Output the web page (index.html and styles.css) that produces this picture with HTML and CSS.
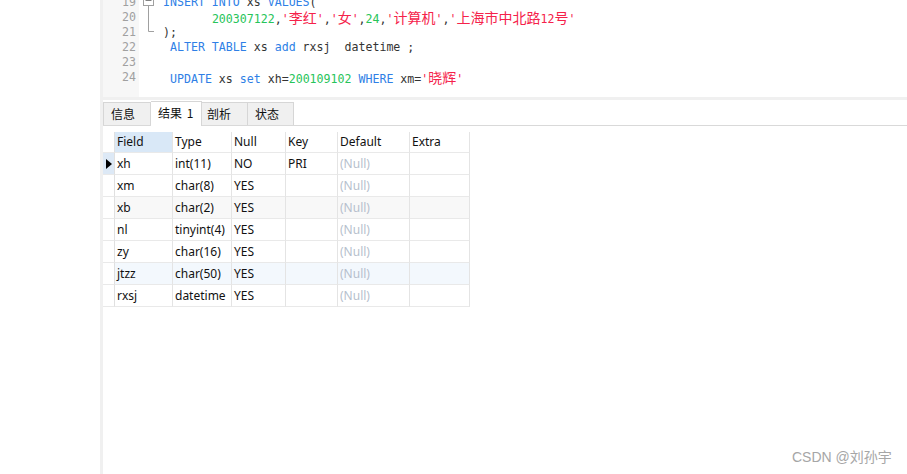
FILE: index.html
```html
<!DOCTYPE html>
<html>
<head>
<meta charset="utf-8">
<link rel="stylesheet" href="styles.css">
</head>
<body>
<div class="app">
  <div class="blank"></div>
  <div class="strip"></div>
  <div class="main">
    <div class="editor">
      <div class="gutter">
        <div class="ln">19</div>
        <div class="ln">20</div>
        <div class="ln">21</div>
        <div class="ln">22</div>
        <div class="ln">23</div>
        <div class="ln">24</div>
      </div>
      <div class="fold">
        <svg width="24" height="40" viewBox="0 0 24 40">
          <rect x="4.5" y="-4.5" width="10" height="10" fill="#fff" stroke="#a0a0a0"/>
          <line x1="6.5" y1="0.5" x2="12.5" y2="0.5" stroke="#808080"/>
          <line x1="9.5" y1="5.5" x2="9.5" y2="31.5" stroke="#a0a0a0"/>
          <line x1="9.5" y1="31.5" x2="15" y2="31.5" stroke="#a0a0a0"/>
        </svg>
      </div>
      <div class="code">
        <div class="line"><span class="kw">INSERT INTO</span> xs <span class="kw">VALUES</span>(</div>
        <div class="line">       <span class="num">200307122</span>,<span class="str">'<span class="cn">李红</span>'</span>,<span class="str">'<span class="cn">女</span>'</span>,<span class="num">24</span>,<span class="str">'<span class="cn">计算机</span>'</span>,<span class="str">'<span class="cn">上海市中北路</span>12<span class="cn">号</span>'</span></div>
        <div class="line">);</div>
        <div class="line"> <span class="kw">ALTER TABLE</span> xs <span class="kw">add</span> rxsj  datetime ;</div>
        <div class="line"> </div>
        <div class="line"> <span class="kw">UPDATE</span> xs <span class="kw">set</span> xh=<span class="num">200109102</span> <span class="kw">WHERE</span> xm=<span class="str">'<span class="cn">晓辉</span>'</span></div>
      </div>
    </div>
    <div class="band"></div>
    <div class="tabs">
      <div class="tab t1">信息</div>
      <div class="tab active t2">结果 1</div>
      <div class="tab t3">剖析</div>
      <div class="tab t4">状态</div>
    </div>
    <div class="grid">
      <div class="c ind"></div><div class="c hd sel">Field</div><div class="c hd">Type</div><div class="c hd">Null</div><div class="c hd">Key</div><div class="c hd">Default</div><div class="c hd">Extra</div>

      <div class="c ind cur"><span class="tri"></span></div><div class="c">xh</div><div class="c">int(11)</div><div class="c">NO</div><div class="c">PRI</div><div class="c nul">(Null)</div><div class="c"></div>

      <div class="c ind"></div><div class="c">xm</div><div class="c">char(8)</div><div class="c">YES</div><div class="c"></div><div class="c nul">(Null)</div><div class="c"></div>

      <div class="c ind"></div><div class="c g">xb</div><div class="c g">char(2)</div><div class="c g">YES</div><div class="c g"></div><div class="c g nul">(Null)</div><div class="c g"></div>

      <div class="c ind"></div><div class="c">nl</div><div class="c">tinyint(4)</div><div class="c">YES</div><div class="c"></div><div class="c nul">(Null)</div><div class="c"></div>

      <div class="c ind"></div><div class="c">zy</div><div class="c">char(16)</div><div class="c">YES</div><div class="c"></div><div class="c nul">(Null)</div><div class="c"></div>

      <div class="c ind"></div><div class="c h">jtzz</div><div class="c h">char(50)</div><div class="c h">YES</div><div class="c h"></div><div class="c h nul">(Null)</div><div class="c h"></div>

      <div class="c ind"></div><div class="c">rxsj</div><div class="c">datetime</div><div class="c">YES</div><div class="c"></div><div class="c nul">(Null)</div><div class="c"></div>
    </div>
  </div>
</div>
<div class="watermark">CSDN @刘孙宇</div>
</body>
</html>
```
FILE: styles.css
```css
* { box-sizing: border-box; }
html, body { margin: 0; padding: 0; background: #fff; }
body { width: 907px; height: 474px; overflow: hidden; position: relative; }

.app { display: flex; height: 474px; }
.blank { width: 100px; flex: none; background: #fff; }
.strip { width: 3px; flex: none; background: #f0f0f0; }
.main { flex: 1; display: flex; flex-direction: column; min-width: 0; }

.editor { height: 97px; display: flex; overflow: hidden; background: #fff; }
.gutter { width: 36px; flex: none; background: #f7f7f7; padding-right: 3px; }
.ln, .line {
  height: 15px; line-height: 15px;
  font-family: "DejaVu Sans Mono", "Noto Sans CJK SC", monospace;
  font-size: 11.6px;
  white-space: pre;
}
.gutter .ln:first-child, .code .line:first-child { margin-top: -5px; }
.ln { text-align: right; color: #a0a0a0; }
.fold { width: 24px; flex: none; }
.fold svg { display: block; }
.code { flex: 1; color: #333; }
.kw { color: #2f7fe6; }
.num { color: #27c45a; }
.str { color: #f5224a; }
.cn { font-family: "Noto Sans CJK SC", sans-serif; font-size: 14px; line-height: 15px; }

.band { height: 3px; background: #f0f0f0; }

.tabs {
  height: 26px; display: flex; align-items: flex-end;
  border-bottom: 1px solid #d9d9d9;
}
.tab {
  height: 23px; background: #f0f0f0;
  border: 1px solid #d6d6d6; border-bottom: none;
  font-family: "Noto Sans CJK SC", sans-serif; font-size: 12px; color: #111;
  line-height: 21px; padding-left: 7px;
}
.tab + .tab { border-left: none; }
.tab.active {
  height: 25px; background: #fff; margin-bottom: -1px; line-height: 21px;
  padding-left: 7px; word-spacing: 2px;
}
.t1 { width: 48px; }
.t2 { width: 51px; }
.t3 { width: 46px; padding-left: 5px; }
.t4 { width: 46px; }

.grid {
  margin-top: 6px;
  display: grid;
  grid-template-columns: 12px 58px 59px 54px 52px 72px 60px;
  grid-auto-rows: 22px;
  grid-template-rows: 21px;
  width: 367px;
  font-family: "Noto Sans", "Noto Sans CJK SC", sans-serif;
  font-size: 12px; color: #111;
}
.c {
  border-right: 1px solid #e4e4e4; border-bottom: 1px solid #e9e9e9;
  padding-left: 2px; line-height: 21px; white-space: nowrap; overflow: hidden;
}
.hd { line-height: 20px; }
.sel { background: #d9e8f7; }
.ind { padding: 0; border-right-color: #e0e0e0; position: relative; }
.cur { background: #dde9f6; }
.tri {
  position: absolute; left: 3px; top: 6px;
  width: 0; height: 0;
  border-left: 6px solid #000;
  border-top: 5px solid transparent; border-bottom: 5px solid transparent;
}
.g { background: #f8f8f8; }
.h { background: #f3f8fd; }
.nul { color: #b6bfcd; }

.watermark {
  position: absolute; left: 792px; top: 448px;
  font-family: "Liberation Sans", "Noto Sans CJK SC", sans-serif;
  font-size: 14px; color: #a6a6a6; line-height: 18px;
}
```
